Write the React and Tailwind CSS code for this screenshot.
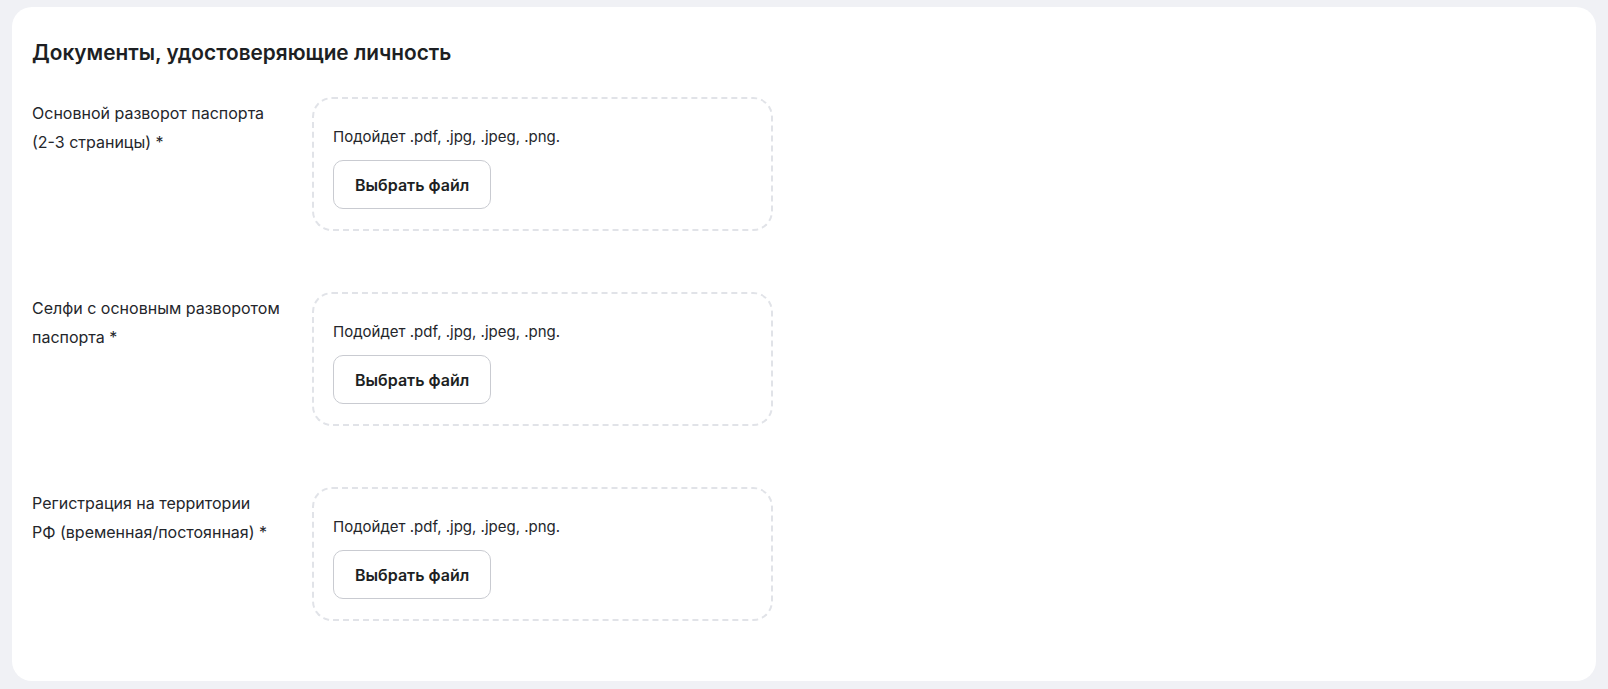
const rows = [
  ["Основной разворот паспорта", "(2-3 страницы) *"],
  ["Селфи с основным разворотом", "паспорта *"],
  ["Регистрация на территории", "РФ (временная/постоянная) *"],
];

function Dropzone() {
  return (
    <div className="h-[134px] w-[461px] rounded-[20px] border-2 border-dashed border-[#e1e3e8] px-[19px] pt-[26px]">
      <p className="text-[15px] leading-6 text-[#24262b]">Подойдет .pdf, .jpg, .jpeg, .png.</p>
      <div className="mt-[11px]">
        <button className="h-[49px] rounded-[10px] border border-[#c9cbd1] bg-white px-[21px] text-[16px] font-semibold text-[#1d1f23]">
          Выбрать файл
        </button>
      </div>
    </div>
  );
}

export default function App() {
  return (
    <div className="min-h-screen bg-[#f0f1f5] px-3 py-[7px]" style={{ fontFamily: "Inter, 'Noto Sans', sans-serif" }}>
      <div className="rounded-[20px] bg-white px-5 pb-[60px] pt-8">
        <h2 className="mb-[30px] text-[20.8px] font-semibold leading-7 text-[#1d1f23]">
          Документы, удостоверяющие личность
        </h2>
        <div className="flex flex-col gap-[61px]">
          {rows.map((r, i) => (
            <div key={i} className="flex">
              <div className="w-[280px] shrink-0 pt-[2px] text-[16px] leading-[29px] text-[#24262b]">
                <div>{r[0]}</div>
                <div>{r[1]}</div>
              </div>
              <Dropzone />
            </div>
          ))}
        </div>
      </div>
    </div>
  );
}
